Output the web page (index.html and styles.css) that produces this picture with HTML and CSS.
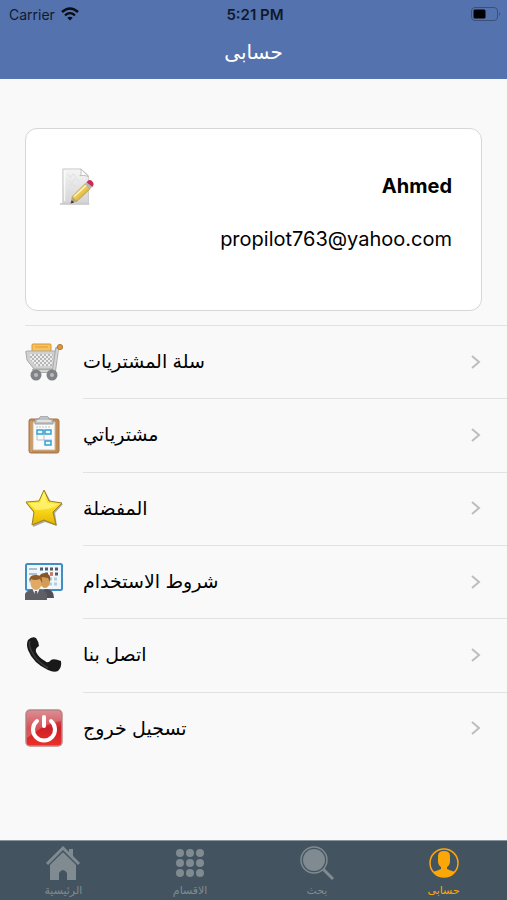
FILE: index.html
```html
<!DOCTYPE html>
<html lang="ar">

<head>
  <meta charset="UTF-8">
  <meta name="viewport" content="width=device-width, initial-scale=1">
  <title>حسابى</title>
  <link rel="stylesheet" href="styles.css">
</head>

<body>

  <header class="header">
    <div class="status">
      <div class="carrier">
        <span>Carrier</span>
        <svg width="18" height="14" viewBox="0 0 18 14">
          <path d="M1 5 Q9 -2 17 5" fill="none" stroke="#080c14" stroke-width="2.5"/>
          <path d="M4 8.3 Q9 4 14 8.3" fill="none" stroke="#080c14" stroke-width="2.3"/>
          <path d="M6.3 10.8 Q9 8.6 11.7 10.8 L9 13.6Z" fill="#080c14"/>
        </svg>
      </div>
      <time>5:21 PM</time>
      <div class="battery">
        <svg width="30" height="14" viewBox="0 0 30 14">
          <rect x=".5" y=".5" width="26" height="13" rx="3.5" fill="none" stroke="#3b5079"/>
          <rect x="2.5" y="2.5" width="12" height="9" rx="1.5" fill="#000"/>
          <path d="M28 5 Q30 7 28 9Z" fill="#3b5079"/>
        </svg>
      </div>
    </div>
    <h1>حسابى</h1>
  </header>

  <main>
    <section class="card">
      <button class="edit" type="button" aria-label="تعديل">
        <svg width="36" height="40" viewBox="0 0 38 42">
          <defs>
            <linearGradient id="paper" x1="0" y1="0" x2="0" y2="1">
              <stop offset="0" stop-color="#f5f5f5"/>
              <stop offset="1" stop-color="#d5d5d5"/>
            </linearGradient>
            <linearGradient id="pencil" x1="0" y1="0" x2="1" y2="1">
              <stop offset="0" stop-color="#fbeaa0"/>
              <stop offset=".5" stop-color="#e9c850"/>
              <stop offset="1" stop-color="#a98329"/>
            </linearGradient>
          </defs>
          <path d="M0 40H31" stroke="#cfcfcf" stroke-width="2"/>
          <path d="M3 3H22L30 10V39H3Z" fill="url(#paper)" stroke="#c9c9c9"/>
          <path d="M5 5V37" stroke="#fff"/>
          <path d="M8 8l3 4 3-4 3 4M8 14l4 4 4-5 5 4M8 21l5-2 4 3M8 27h6" fill="none" stroke="#dedede"/>
          <path d="M22 3Q23 9 21 10Q25 9 30 11Z" fill="#fff" stroke="#bdbdbd"/>
          <path d="M12 38L13 32L26 19L32 24L18 37Z" fill="url(#pencil)" stroke="#a58d50" stroke-width=".6"/>
          <path d="M15 32L28 20" stroke="#fff3b8" stroke-width="1.5"/>
          <path d="M12 39L13 32L18 37Z" fill="#bba47d"/>
          <path d="M11 39.5L12.5 36L15 38.5Z" fill="#3d352c"/>
          <path d="M26 19L28 17L34 22L32 24Z" fill="#b7b7bd"/>
          <path d="M28 17Q31 13 34 16Q37 19 34 22Z" fill="#c92b56"/>
        </svg>
      </button>
      <div class="user">
        <h2>Ahmed</h2>
        <p>propilot763@yahoo.com</p>
      </div>
    </section>

    <nav class="menu">
      <a href="#cart">
        <svg class="icon" viewBox="0 0 38 38">
          <defs>
            <pattern id="mesh" width="4" height="4" patternUnits="userSpaceOnUse">
              <rect width="4" height="4" fill="#ededed"/>
              <path d="M0 0L4 4M4 0L0 4" stroke="#a8a8a8" stroke-width=".8"/>
            </pattern>
          </defs>
          <rect x="7" y="1" width="19" height="9" rx="1" fill="#fac258" stroke="#d9923a"/>
          <path d="M10 4H23" stroke="#e8a840" stroke-width="1.5"/>
          <path d="M1 10Q0 8 2 8H31L29 26H9L2 17Z" fill="#d0d0d0" stroke="#a9a9a9"/>
          <path d="M5 11H28L27 23H11L5 16Z" fill="url(#mesh)"/>
          <path d="M35 4L32 6L29 28H7" fill="none" stroke="#aaa" stroke-width="4"/>
          <path d="M34 5L32 7L29 28H7" fill="none" stroke="#d5d5d5" stroke-width="2"/>
          <circle cx="35" cy="4" r="2.6" fill="#dc9742" stroke="#b5792f"/>
          <circle cx="11" cy="32" r="5.5" fill="#808285"/>
          <circle cx="27" cy="32" r="5.5" fill="#808285"/>
          <circle cx="11" cy="32" r="2" fill="#b9bbbd"/>
          <circle cx="27" cy="32" r="2" fill="#b9bbbd"/>
        </svg>
        <span>سلة المشتريات</span>
        <svg class="arrow" viewBox="0 0 10 14"><path d="M1 1L8 7L1 13"/></svg>
      </a>
      <a href="#orders">
        <svg class="icon" viewBox="0 0 38 38">
          <rect x="4" y="3" width="30" height="34" rx="2" fill="#c18a50" stroke="#a27648"/>
          <path d="M6 5V36" stroke="#dcae7a"/>
          <path d="M8 6H30V34H8Z" fill="#fafafa" stroke="#cdbda9"/>
          <path d="M11 11H25" stroke="#c2c2c2" stroke-dasharray="2 1"/>
          <path d="M12 18V24H27M19 14V24" fill="none" stroke="#bcbcbc"/>
          <path d="M12 14H18V18H12ZM20 14H26V18H20ZM20 25H26V29H20Z" fill="#e8f8ff" stroke="#37a0d2" stroke-width="1.5"/>
          <path d="M10 8V4Q10 3 14 3Q14 0 19 0Q24 0 24 3Q28 3 28 4V8Z" fill="#bfc1c2" stroke="#9b9d9e"/>
          <path d="M12 5H26" stroke="#ededed" stroke-width="1.5"/>
        </svg>
        <span>مشترياتي</span>
        <svg class="arrow" viewBox="0 0 10 14"><path d="M1 1L8 7L1 13"/></svg>
      </a>
      <a href="#favorites">
        <svg class="icon" viewBox="0 0 38 38">
          <defs>
            <linearGradient id="gold" x1="0" y1="0" x2="0" y2="1">
              <stop offset="0" stop-color="#fff25c"/>
              <stop offset=".5" stop-color="#fddd20"/>
              <stop offset="1" stop-color="#e3b400"/>
            </linearGradient>
          </defs>
          <path d="M20 2L26 13L38 15L30 24L32 37L20 33L8 38L9 24L1 14L14 13Z" fill="#a7a7a7"/>
          <path d="M19 1L24 12L37 14L28 23L31 36L19 31L7 36L9 23L1 13L14 12Z" fill="url(#gold)" stroke="#9f8015" stroke-linejoin="round"/>
          <path d="M19 4L22 14L34 15Q26 21 11 21L4 14L15 14Z" fill="#fff78b" opacity=".65"/>
        </svg>
        <span>المفضلة</span>
        <svg class="arrow" viewBox="0 0 10 14"><path d="M1 1L8 7L1 13"/></svg>
      </a>
      <a href="#terms">
        <svg class="icon" viewBox="0 0 38 38">
          <rect x="1" y="1" width="36" height="26" rx="1.5" fill="#eff7fc" stroke="#408fc2" stroke-width="2"/>
          <path d="M4 6H12M4 11H12M4 16H12" stroke="#789" stroke-width="1.2"/>
          <path d="M15 6H34M20 11H34" stroke="#535b69" stroke-width="3" stroke-dasharray="3 2"/>
          <path d="M25 11H28" stroke="#d87561" stroke-width="3"/>
          <path d="M24 16H34M24 21H34" stroke="#b5ceda" stroke-width="3" stroke-dasharray="3 2"/>
          <path d="M16 35Q16 26 22 26Q29 27 29 35Z" fill="#4d5058"/>
          <ellipse cx="20" cy="18" rx="5" ry="7" fill="#d39a58"/>
          <path d="M14 18Q13 10 20 10Q27 11 25 19L23 15L17 14Z" fill="#865625"/>
          <path d="M0 37V31Q1 28 8 26H14Q21 28 22 31V37Z" fill="#5d5f64"/>
          <path d="M7 25L11 34L15 25Z" fill="#f3f3f3"/>
          <path d="M10 28H12L13 33L11 36L9 33Z" fill="#5b5f6b"/>
          <ellipse cx="11" cy="20" rx="5.5" ry="7" fill="#e0a966"/>
          <path d="M5 20Q3 12 10 12Q18 11 17 20L15 16Q10 18 6 16Z" fill="#8f5c28"/>
        </svg>
        <span>شروط الاستخدام</span>
        <svg class="arrow" viewBox="0 0 10 14"><path d="M1 1L8 7L1 13"/></svg>
      </a>
      <a href="#contact">
        <svg class="icon" viewBox="0 0 38 38">
          <path d="M3 4Q7 0 11 2Q14 6 14 10Q10 12 11 16Q14 22 20 25Q23 28 26 24Q29 22 36 25Q37 31 33 35Q29 37 23 34Q8 27 3 14Q1 8 3 4Z" fill="#191919"/>
          <path d="M5 5Q3 9 7 16Q11 25 23 32" fill="none" stroke="#3c3c3c" stroke-width="1.5"/>
        </svg>
        <span>اتصل بنا</span>
        <svg class="arrow" viewBox="0 0 10 14"><path d="M1 1L8 7L1 13"/></svg>
      </a>
      <a href="#logout">
        <svg class="icon" viewBox="0 0 38 38">
          <defs>
            <linearGradient id="red" x1="0" y1="0" x2="0" y2="1">
              <stop offset="0" stop-color="#cf7279"/>
              <stop offset=".5" stop-color="#cd2029"/>
              <stop offset="1" stop-color="#ec3028"/>
            </linearGradient>
          </defs>
          <rect x="1" y="1" width="36" height="36" rx="4" fill="url(#red)" stroke="#b9898b" stroke-width="1.5"/>
          <path d="M2 4Q2 2 5 2H33Q36 2 36 5V12Q20 14 2 29Z" fill="#fff" opacity=".22"/>
          <path d="M12 12A11 11 0 1 0 26 12" fill="none" stroke="#fff" stroke-width="4" stroke-linecap="round"/>
          <path d="M19 8V17" stroke="#fff" stroke-width="4" stroke-linecap="round"/>
        </svg>
        <span>تسجيل خروج</span>
        <svg class="arrow" viewBox="0 0 10 14"><path d="M1 1L8 7L1 13"/></svg>
      </a>
    </nav>
  </main>

  <nav class="tabs">
    <a href="#home">
      <svg width="36" height="36" viewBox="0 0 36 36">
        <path d="M5 19L18 7L31 19V35H22V28Q18 22 14 28V35H5Z" fill="currentColor"/>
        <path d="M2 20L18 4L34 20" fill="none" stroke="#445360" stroke-width="4"/>
        <path d="M24 4H28V14L24 10Z" fill="currentColor"/>
        <path d="M2 19L18 3L34 19" fill="none" stroke="currentColor" stroke-width="3"/>
      </svg>
      <span>الرئيسية</span>
    </a>
    <a href="#sections">
      <svg width="36" height="36" viewBox="0 0 36 36" fill="currentColor">
        <circle cx="8" cy="8" r="4"/><circle cx="18" cy="8" r="4"/><circle cx="28" cy="8" r="4"/>
        <circle cx="8" cy="18" r="4"/><circle cx="18" cy="18" r="4"/><circle cx="28" cy="18" r="4"/>
        <circle cx="8" cy="28" r="4"/><circle cx="18" cy="28" r="4"/><circle cx="28" cy="28" r="4"/>
      </svg>
      <span>الاقسام</span>
    </a>
    <a href="#search">
      <svg width="36" height="36" viewBox="0 0 36 36">
        <circle cx="15" cy="15" r="13" fill="none" stroke="currentColor" stroke-width="1.5"/>
        <circle cx="15" cy="15" r="11" fill="currentColor"/>
        <path d="M24 24L34 34" stroke="currentColor" stroke-width="3"/>
      </svg>
      <span>بحث</span>
    </a>
    <a class="active" href="#account">
      <svg width="36" height="36" viewBox="0 0 36 36">
        <circle cx="18" cy="18" r="14" fill="none" stroke="currentColor" stroke-width="1.5"/>
        <path d="M12 11Q12 6 18 6Q24 6 24 11V16Q24 20 21 22V24Q23 25 29 27Q25 32 18 32Q11 32 7 27Q13 25 15 24V22Q12 20 12 16Z" fill="currentColor"/>
      </svg>
      <span>حسابى</span>
    </a>
  </nav>

</body>

</html>
```

FILE: styles.css
```css
* {
  box-sizing: border-box;
}

body {
  margin: 0;
  min-height: 100vh;
  display: flex;
  flex-direction: column;
  background: #f9f9f9;
  color: #000000;
  font-family: Inter, "DejaVu Sans", sans-serif;
}

a {
  color: inherit;
  text-decoration: none;
}

.header {
  height: 79px;
  background: #5473ae;
}

.status {
  display: grid;
  grid-template-columns: 1fr auto 1fr;
  align-items: center;
  height: 28px;
  padding: 0 6px 0 9px;
  font-size: 14px;
  color: #10192b;
}

.status time {
  font-size: 15px;
  font-weight: 600;
}

.carrier {
  display: flex;
  align-items: center;
  gap: 6px;
}

.battery {
  display: flex;
  justify-content: flex-end;
}

h1 {
  margin: 0;
  color: #ffffff;
  font-size: 20px;
  font-weight: 500;
  line-height: 48px;
  text-align: center;
}

main {
  flex: 1;
}

.card {
  display: flex;
  justify-content: space-between;
  align-items: flex-start;
  min-height: 183px;
  margin: 49px 25px 14px;
  padding: 37px 29px 36px 34px;
  background: #ffffff;
  border: 1px solid #d6d6d6;
  border-radius: 12px;
}

.edit {
  padding: 0;
  border: 0;
  background: none;
}

.edit svg {
  display: block;
}

.user {
  text-align: right;
  font-size: 20px;
  line-height: 24px;
}

h2 {
  margin: 8px 0 29px;
  font-size: 20px;
  font-weight: 700;
}

p {
  margin: 0;
}

.menu {
  display: grid;
  grid-auto-rows: 1fr;
  min-height: 440px;
  margin-left: 25px;
}

.menu a {
  display: grid;
  grid-template-columns: 38px 1fr 10px;
  column-gap: 20px;
  align-items: center;
  padding-right: 26px;
  font-size: 19px;
  background: linear-gradient(#e2e2e2, #e2e2e2) right top / calc(100% - 58px) 1px no-repeat;
}

.menu a:first-child {
  background-size: 100% 1px;
}

.icon {
  width: 38px;
  height: 38px;
}

.arrow {
  width: 10px;
  height: 14px;
  fill: none;
  stroke: #bdbdbd;
  stroke-width: 2;
}

.tabs {
  display: grid;
  grid-template-columns: repeat(4, 1fr);
  height: 60px;
  padding-top: 4px;
  background: #445360;
  border-top: 1px solid #89939b;
  color: #7f8b90;
}

.tabs a {
  display: flex;
  flex-direction: column;
  align-items: center;
  font-size: 11px;
  line-height: 18px;
}

.tabs .active {
  color: #fca708;
}
```
